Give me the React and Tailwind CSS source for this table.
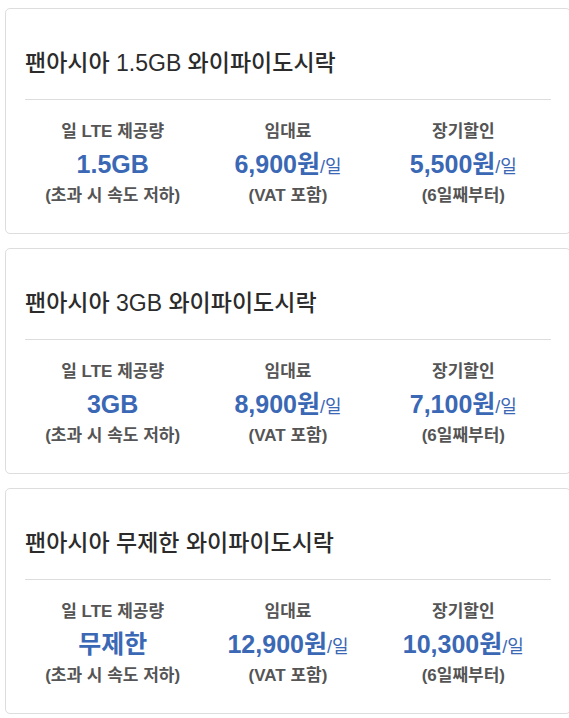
const plans = [
  {
    title: "팬아시아 1.5GB 와이파이도시락",
    data: "1.5GB",
    price: "6,900원",
    discount: "5,500원",
  },
  {
    title: "팬아시아 3GB 와이파이도시락",
    data: "3GB",
    price: "8,900원",
    discount: "7,100원",
  },
  {
    title: "팬아시아 무제한 와이파이도시락",
    data: "무제한",
    price: "12,900원",
    discount: "10,300원",
  },
];

function Stat({ label, value, unit, note }) {
  return (
    <div className="flex flex-col items-center">
      <div className="text-[17px] font-bold leading-[24px] text-[#555]">{label}</div>
      <div className="mt-[3px] leading-[34px] text-[#3b68b5]">
        <span className="text-[25px] font-bold">{value}</span>
        {unit && <span className="text-[18px]">{unit}</span>}
      </div>
      <div className="-mt-px text-[17px] font-bold leading-[24px] text-[#555]">{note}</div>
    </div>
  );
}

function PlanCard({ plan }) {
  return (
    <div className="h-[226px] w-[566px] rounded-[5px] border border-[#dddddd] bg-white px-[19px] pt-[38px]">
      <h2 className="text-[23px] font-medium leading-[32px] text-[#2b2b2b]">{plan.title}</h2>
      <div className="mt-[20px] border-t border-[#dddddd]" />
      <div className="mt-[20px] grid grid-cols-3">
        <Stat label="일 LTE 제공량" value={plan.data} note="(초과 시 속도 저하)" />
        <Stat label="임대료" value={plan.price} unit="/일" note="(VAT 포함)" />
        <Stat label="장기할인" value={plan.discount} unit="/일" note="(6일째부터)" />
      </div>
    </div>
  );
}

export default function App() {
  return (
    <div
      className="h-[718px] overflow-hidden bg-white pl-[5px] pt-[8px]"
      style={{ fontFamily: '"Liberation Sans", "Noto Sans CJK KR", sans-serif' }}
    >
      <div className="flex flex-col gap-[14px]">
        {plans.map((plan) => (
          <PlanCard key={plan.title} plan={plan} />
        ))}
      </div>
    </div>
  );
}
